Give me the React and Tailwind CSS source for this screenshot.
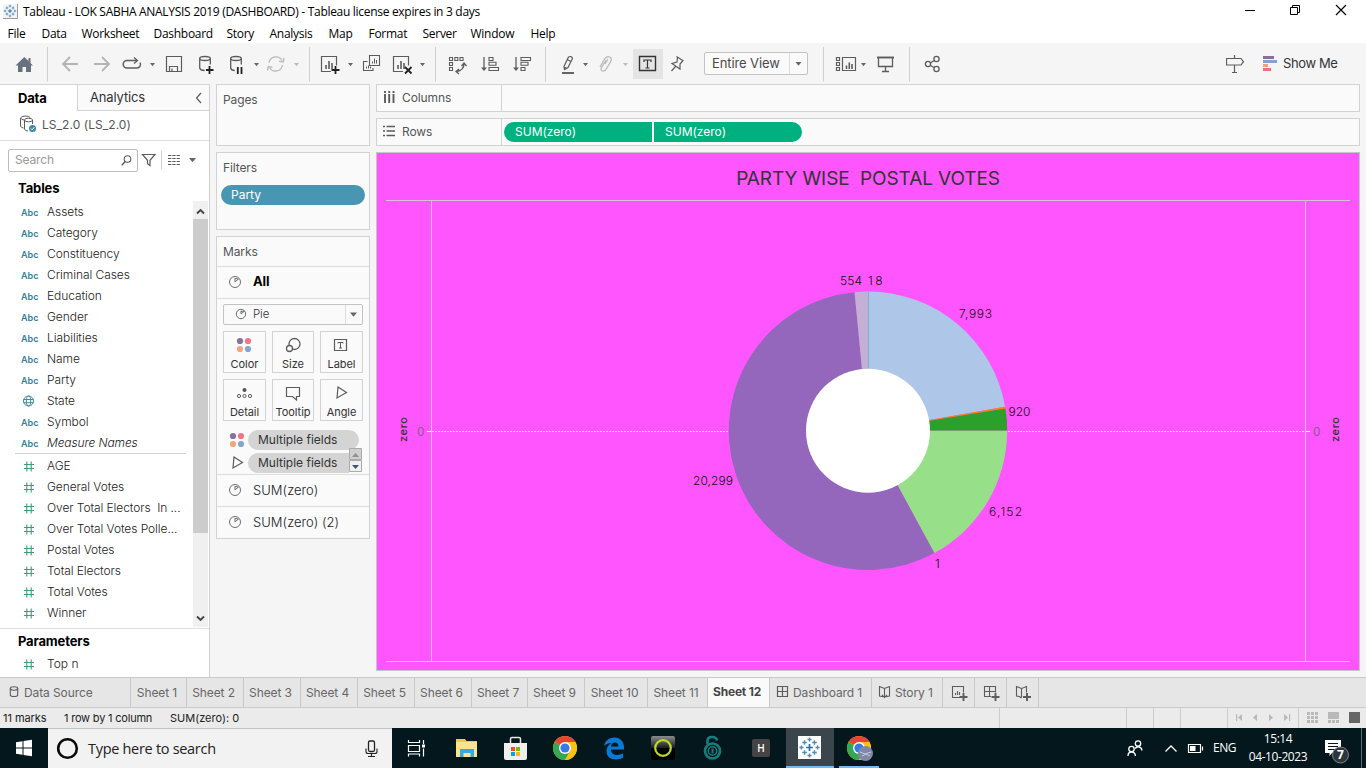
import React from "react";

/* A toolbar-like slice: its children are drawn in window coordinates. */
function Cell({ x, y = 43, w, h = 41, className = "", children }) {
  return (
    <svg
      width={w}
      height={h}
      viewBox={`${x} ${y} ${w} ${h}`}
      fill="none"
      stroke="#5c5c5c"
      strokeWidth="1.3"
      className={`block shrink-0 ${className}`}
    >
      {children}
    </svg>
  );
}

const Caret = ({ x, y = 63, c = "#666", s = 5 }) => (
  <path d={`M${x} ${y}h${s}l${-s / 2} ${s / 2 + 0.8}z`} fill={c} stroke="none" />
);
const Sep = ({ x }) => <path d={`M${x + 0.5} 47V81.5`} stroke="#cfcfcf" strokeWidth="1" />;

function PieIcon({ cx, cy, r = 5.5 }) {
  return (
    <g strokeWidth="1" stroke="#6e6e6e">
      <circle cx={cx} cy={cy} r={r} />
      <path d={`M${cx} ${cy}V${cy - r + 1.5}M${cx} ${cy}L${cx + r * 0.65} ${cy - r * 0.55}M${cx} ${cy - r + 2}Q${cx + 2.5} ${cy - r + 2} ${cx + 3.4} ${cy - 2.6}`} />
    </g>
  );
}

function TableauMark({ cx, cy, s = 1, bg }) {
  const p = (x, y, a) => `M${cx + (x - a) * s} ${cy + y * s}h${2 * a * s}M${cx + x * s} ${cy + (y - a) * s}v${2 * a * s}`;
  return (
    <g strokeWidth={s * 0.9}>
      {bg}
      <path d={p(0, 0, 2.2)} stroke="#2f6f9f" strokeWidth={s * 1.1} />
      <path d={p(-3.2, -3.2, 1.5) + p(3.2, -3.2, 1.5) + p(-3.2, 3.2, 1.5) + p(3.2, 3.2, 1.5)} stroke="#4a8fb8" />
      <path d={p(0, -5.2, 1.3) + p(0, 5.2, 1.3) + p(-5.2, 0, 1.3) + p(5.2, 0, 1.3)} stroke="#5a86b0" />
    </g>
  );
}

function TitleBar() {
  return (
    <div className="flex h-6 items-center bg-white">
      <Cell x={0} y={0} w={23} h={24}>
        <rect x="3" y="4" width="14.5" height="14.5" fill="#f4f4f4" stroke="none" />
        <path d="M3 18.5h14.5V4" stroke="#9a9a9a" strokeWidth="1" />
        <TableauMark cx={10} cy={11} s={0.95} />
      </Cell>
      <span className="grow text-[12px] tracking-[-0.3px] text-black">
        Tableau - LOK SABHA ANALYSIS 2019 (DASHBOARD) - Tableau license expires in 3 days
      </span>
      <Cell x={1226} y={0} w={140} h={24}>
        <g stroke="#000" strokeWidth="1">
          <path d="M1245 10.5h10M1290.5 7.5h7v7h-7zM1292.5 7V5.500h7v7h-2" />
          <path d="M1336 5l10 10M1346 5l-10 10" strokeWidth="1.2" />
        </g>
      </Cell>
    </div>
  );
}

const menus = [
  ["File", "w-[34px]"],
  ["Data", "w-[40px]"],
  ["Worksheet", "w-[72px]"],
  ["Dashboard", "w-[73px]"],
  ["Story", "w-[43px]"],
  ["Analysis", "w-[59px]"],
  ["Map", "w-[40px]"],
  ["Format", "w-[54px]"],
  ["Server", "w-[48px]"],
  ["Window", "w-[60px]"],
  ["Help", "w-[40px]"],
];

function MenuBar() {
  return (
    <div className="flex h-[19px] items-center bg-white pl-[7.5px] text-[12px] leading-[19px] tracking-[-0.28px] text-black">
      {menus.map(([m, w]) => (
        <span key={m} className={`${w} shrink-0`}>{m}</span>
      ))}
    </div>
  );
}

function Bars({ x, y }) {
  return <path d={`M${x} ${y}v-4M${x + 3} ${y}v-8M${x + 6} ${y}v-6`} strokeWidth="1.6" />;
}

function Toolbar() {
  return (
    <div className="flex h-[41px] items-center bg-[#f5f5f5]">
      <Cell x={0} w={48}>
        <path d="M24.300 57L15.500 65.500H18V72h4.500v-5h3.500v5H31v-6.500h2L30.500 63v-5h-2v3z" fill="#68727f" stroke="none" />
        <Sep x={47} />
      </Cell>
      <Cell x={48} w={70}>
        <g stroke="#b4b4b4" strokeWidth="1.8">
          <path d="M78 64H63M70 57l-7 7 7 7" />
          <path d="M94 64h15M102 57l7 7-7 7" />
        </g>
      </Cell>
      <Cell x={118} w={44}>
        <path d="M137 60.500H127a3.800 3.800 0 0 0 0 7.600H137a3.600 3.600 0 0 0 3-5.500" strokeWidth="1.5" />
        <path d="M134 57.500l3.500 3-3.500 3" />
        <Caret x={150} />
      </Cell>
      <Cell x={162} w={32}>
        <path d="M166.500 56.500h15v15h-15zM169.500 71.500v-5h8v5M172 71.500v-3" strokeWidth="1.2" />
      </Cell>
      <Cell x={194} w={32}>
        <ellipse cx="205" cy="58.500" rx="5.300" ry="2" />
        <path d="M199.700 58.500v9.500q.5 2.500 5 2.500M210.300 58.500v6" />
        <path d="M206 70h7.500M209.500 66v8" stroke="#222" strokeWidth="1.8" />
      </Cell>
      <Cell x={226} w={37}>
        <ellipse cx="236" cy="58.500" rx="5.300" ry="2" />
        <path d="M230.700 58.500v9.500q.5 2.500 4 2.500M241.300 58.500v6" />
        <path d="M237.800 67v7M241.500 67v7" stroke="#222" strokeWidth="1.8" />
        <Caret x={254} />
      </Cell>
      <Cell x={263} w={47}>
        <g stroke="#bcbcbc" strokeWidth="1.4">
          <path d="M269 62.500a7 7 0 0 1 13-2M282.500 65a7 7 0 0 1-13 2.500" />
          <path d="M284 58l-.8 4-4-.8M267.500 70.500l.8-4 4 .8" />
        </g>
        <Caret x={294} c="#bbb" />
        <Sep x={309} />
      </Cell>
      <Cell x={310} w={48}>
        <path d="M331 71.500h-9.500v-15h15v9" strokeWidth="1.2" />
        <Bars x={326} y={69} />
        <path d="M331.500 70h8M335.500 66v8" stroke="#222" strokeWidth="1.8" />
        <Caret x={348} />
      </Cell>
      <Cell x={358} w={30}>
        <path d="M369.500 55.500h10v10h-10zM367.500 61.500h-4v9h9.500V68" strokeWidth="1.1" />
        <path d="M372.500 63.500v-2M374.500 63.500v-5M376.500 63.500v-3.500M366.500 68.500v-2M368.500 68.500v-3M370.500 68.500v-2" strokeWidth="1" />
      </Cell>
      <Cell x={388} w={48}>
        <path d="M403 71.500h-9.500v-15h15v9" strokeWidth="1.2" />
        <Bars x={398} y={69} />
        <path d="M405 67l6.500 6.500M411.500 67L405 73.500" stroke="#222" strokeWidth="1.8" />
        <Caret x={420} />
        <Sep x={435} />
      </Cell>
      <Cell x={436} w={40}>
        <path d="M449.500 57.500h3v3h-3zM454.800 57.500h3v3h-3zM460 57.500h3v3h-3zM449.500 62.500h3v3h-3zM449.500 67.500h3v3h-3z" strokeWidth="1.100" />
        <path d="M464 63.500q0 7-7.500 8M461.500 66l2.500-3 2.500 3M459 69l-3 2.500 3 2.500" />
      </Cell>
      <Cell x={476} w={70}>
        <path d="M484 57v12" />
        <path d="M481 67.500h6l-3 3.500z" fill="#5c5c5c" stroke="none" />
        <path d="M489 57.500h4v3h-4zM489 62.300h7v3h-7zM489 67.500h9.500v3H489z" strokeWidth="1.1" />
        <path d="M516 57v12" />
        <path d="M513 67.500h6l-3 3.500z" fill="#5c5c5c" stroke="none" />
        <path d="M521 57.500h9.500v3H521zM521 62.300h7v3h-7zM521 67.500h4v3h-4z" strokeWidth="1.1" />
        <Sep x={545} />
      </Cell>
      <Cell x={546} w={47}>
        <path d="M564 66.500l4.500-9.500q3-1.500 4 1.500l-4.500 9-3.500 2zM563.500 67l4 1.500M567 59.500l4 2" strokeWidth="1.2" />
        <path d="M562 73h12" strokeWidth="1.9" />
        <Caret x={583} />
      </Cell>
      <Cell x={593} w={40}>
        <path d="M605 64l3-5M600 67l5-8.500q3-3.500 6-.5 1 2-.5 4l-5 8q-2 2-4 .500-1-1.500 0-3l4.500-7" stroke="#b9b9b9" />
        <Caret x={623} c="#bbb" />
      </Cell>
      <Cell x={633} w={30}>
        <rect x="633" y="49" width="30" height="30" fill="#e4e4e4" stroke="none" />
        <path d="M639.500 56.500h16v14h-16z" stroke="#333" strokeWidth="1.4" />
        <path d="M644 62v-2h7v2M647.500 60v8M645.500 68h4" stroke="#333" strokeWidth="1.200" />
      </Cell>
      <Cell x={663} w={41}>
        <path d="M676.500 56.500l7 4.500M677.500 57l-.5 5-5 1.500 8 5.500v-5l3-3.500M675.500 66.500l-4 4.500" strokeWidth="1.2" />
      </Cell>
      <div className="flex h-[23px] w-[104px] shrink-0 items-center rounded-[2px] border border-[#c3c3c3] bg-[#fafafa]">
        <span className="w-[84px] pl-[7px] text-[13px] tracking-[-0.1px] text-[#4a4a4a]">Entire View</span>
        <Cell x={789} y={53} w={18} h={21}>
          <path d="M789.500 53v21" stroke="#ddd" strokeWidth="1" />
          <Caret x={795.5} y={62} s={6} />
        </Cell>
      </div>
      <Cell x={808} w={62}>
        <Sep x={823} />
        <path d="M836.500 57.500h3v3h-3zM836.500 62.500h3v3h-3zM836.500 67.500h3v3h-3zM842.500 57.500h13v13h-13z" strokeWidth="1.2" />
        <path d="M846.500 69v-3.500M849.300 69v-6.500M852 69v-5" strokeWidth="1.600" />
        <Caret x={861} />
      </Cell>
      <Cell x={870} w={40}>
        <path d="M877 57.500h17" strokeWidth="1.9" />
        <path d="M878.500 58v8.500h14V58M885.500 66.500V71M882 71.500h7" />
        <Sep x={909} />
      </Cell>
      <Cell x={910} w={316}>
        <circle cx="928" cy="64" r="2.600" />
        <circle cx="936.500" cy="59" r="2.600" />
        <circle cx="936.500" cy="69" r="2.600" />
        <path d="M930.500 63l3.500-2.500M930.500 65.500l3.500 2" />
      </Cell>
      <Cell x={1226} w={57}>
        <path d="M1226.500 58.500h14.500l2.500 3.200-2.500 3.300h-14.500zM1234.500 55v3.500M1234.500 65v7.500M1232 72.500h5" strokeWidth="1.200" />
        <g stroke="none">
          <path d="M1263 56h11v3h-11z" fill="#8a6f9a" />
          <path d="M1263 60h14v3h-14z" fill="#7fa3cf" />
          <path d="M1263 64h5v3h-5z" fill="#f2a37c" />
          <path d="M1263 68h8v3h-8z" fill="#fb6b80" />
        </g>
      </Cell>
      <span className="text-[13px] tracking-[-0.4px] text-[#333]">Show Me</span>
    </div>
  );
}

const dims = ["Assets", "Category", "Constituency", "Criminal Cases", "Education", "Gender", "Liabilities", "Name", "Party", "State", "Symbol", "Measure Names"];
const measures = ["AGE", "General Votes", "Over Total Electors\u00a0 In ...", "Over Total Votes Polle...", "Postal Votes", "Total Electors", "Total Votes", "Winner"];

function Hash() {
  return (
    <svg width="47" height="21" className="shrink-0" stroke="#3c9d76" strokeWidth="1.100" fill="none">
      <path d="M24 9.500h10M24 13.500h10M26.800 6.500v10M31.200 6.500v10" />
    </svg>
  );
}
function Globe() {
  return (
    <svg width="47" height="21" className="shrink-0" stroke="#3f8aa8" strokeWidth="1" fill="none">
      <circle cx="28.500" cy="11" r="5" />
      <ellipse cx="28.500" cy="11" rx="2.200" ry="5" />
      <path d="M23.500 9.500h10M23.500 12.700h10" />
    </svg>
  );
}

function DataPane() {
  return (
    <div className="flex h-[593px] w-[210px] shrink-0 flex-col border-r border-[#cfcfcf] bg-white text-[12px] text-[#333]">
      <div className="flex h-[27px] shrink-0 border-t border-[#d4d4d4]">
        <div className="w-[77px] pl-[18px] text-[13px] leading-[26px] font-bold tracking-[-0.2px] text-black">Data</div>
        <div className="flex grow items-center border-b border-l border-[#d4d4d4] bg-[#fafafa] pl-3 text-[13px]">
          <span className="grow tracking-[-0.15px]">Analytics</span>
          <Cell x={191} y={86} w={18} h={22}>
            <path d="M201 92l-4.500 5 4.500 5" strokeWidth="1.200" />
          </Cell>
        </div>
      </div>
      <div className="flex h-[30px] shrink-0 items-center border-b border-[#dedede] pb-[2px]">
        <Cell x={0} y={111} w={42} h={29}>
          <g strokeWidth="1">
            <path d="M20.500 127v-8q1-2 5-2t5 2M20.500 127q1 2 3 2M20.500 119q1 2 4 2" />
            <ellipse cx="28.500" cy="121" rx="4" ry="1.800" />
            <path d="M24.500 121v9q.5 2 3.500 2M32.500 121v4" />
          </g>
          <circle cx="32.500" cy="129.500" r="3.500" fill="#3e88ab" stroke="none" />
          <path d="M30.800 129.500l1.300 1.300 2.200-2.500" stroke="#fff" strokeWidth="1" />
        </Cell>
        <span className="text-[12px] tracking-[0.05px] text-[#555]">LS_2.0 (LS_2.0)</span>
      </div>
      <div className="flex h-[38px] shrink-0 items-center pl-2">
        <div className="flex h-[23px] w-[130px] items-center rounded-[2px] border border-[#bdbdbd]">
          <span className="grow pl-[6px] text-[12px] tracking-[-0.15px] text-[#999]">Search</span>
          <Cell x={116} y={150} w={20} h={21}>
            <circle cx="126.500" cy="159" r="3.300" strokeWidth="1.100" />
            <path d="M124.200 161.500l-3.500 3.700" />
          </Cell>
        </div>
        <Cell x={138} y={141} w={71} h={38}>
          <path d="M142.500 154.500h12.500l-5 5.800v5.200l-2.500-1.800v-3.400z" strokeWidth="1.200" />
          <path d="M161.500 151v18" stroke="#d0d0d0" strokeWidth="1" />
          <path d="M168 155.500h12M168 158.500h12M168 161.500h12M168 164.500h12" strokeDasharray="3.300 1" strokeWidth="1.200" />
          <Caret x={189} y={158} s={7} />
        </Cell>
      </div>
      <div className="h-[22px] shrink-0 pl-[18px] text-[13px] leading-[18px] font-bold tracking-[-0.1px] text-black">Tables</div>
      <div className="flex h-[428px] shrink-0 border-b border-[#dedede] text-[#222]">
        <div className="w-[193px]">
          {dims.map((d) => (
            <div key={d} className="flex h-[21px] items-center">
              {d === "State" ? <Globe /> : <span className="w-[47px] shrink-0 pt-[2px] pl-[21px] text-[9px] font-semibold text-[#3a7e9c]">Abc</span>}
              <span className={d === "Measure Names" ? "font-light tracking-[-0.12px] italic" : "font-light tracking-[-0.06px]"}>{d}</span>
            </div>
          ))}
          <div className="mr-[7px] ml-[15px] h-[2px] border-t border-[#d4d4d4]" />
          {measures.map((m) => (
            <div key={m} className="flex h-[21px] items-center font-light tracking-[-0.08px] whitespace-nowrap">
              <Hash />
              <span>{m}</span>
            </div>
          ))}
        </div>
        <div className="flex h-[426px] w-[15px] flex-col bg-[#f0f0f0] pt-px">
          <Cell x={193} y={202} w={15} h={17}>
            <path d="M197 213.500l3.500-3.500 3.500 3.500" stroke="#444" strokeWidth="1.900" />
          </Cell>
          <div className="h-[314px] bg-[#cccccc]" />
          <div className="grow" />
          <Cell x={193} y={610} w={15} h={17}>
            <path d="M197 616.500l3.500 3.500 3.500-3.500" stroke="#444" strokeWidth="1.900" />
          </Cell>
        </div>
      </div>
      <div className="h-[24px] shrink-0 pl-[18px] text-[13px] leading-[24px] font-bold tracking-[-0.15px] text-black">Parameters</div>
      <div className="flex h-[21px] shrink-0 items-center font-light text-[#222]">
        <Hash />
        <span>Top n</span>
      </div>
    </div>
  );
}

function FourDots({ x, y }) {
  return (
    <g stroke="none">
      <circle cx={x} cy={y} r="3.100" fill="#87709a" />
      <circle cx={x + 8} cy={y} r="3.100" fill="#fb7286" />
      <circle cx={x} cy={y + 8} r="3.100" fill="#f2a680" />
      <circle cx={x + 8} cy={y + 8} r="3.100" fill="#84a6d0" />
    </g>
  );
}

function MarkButton({ label, x, y, w, children }) {
  return (
    <div className="flex h-[42px] flex-col items-center border border-[#d2d2d2] text-[11px] tracking-[-0.05px] text-[#333]">
      <Cell x={x + 1} y={y + 1} w={w - 2} h={25}>{children}</Cell>
      <span className="leading-[14px] whitespace-nowrap">{label}</span>
    </div>
  );
}

const pill = "flex h-[20px] items-center rounded-full text-[12px]";

function Cards() {
  return (
    <div className="flex w-[154px] shrink-0 flex-col gap-[6px] text-[12px] tracking-[-0.12px] text-[#555]">
      <div className="h-[62px] border border-[#d2d2d2] bg-[#fafafa] pt-[6px] pl-[6px] leading-[18px]">Pages</div>
      <div className="h-[78px] border border-[#d2d2d2] bg-[#fafafa] pt-[6px] pl-1">
        <div className="pl-[2px] leading-[18px]">Filters</div>
        <div className={`${pill} mt-2 w-[144px] bg-[#4996b2] pl-[10px] tracking-[0px] text-white`}>Party</div>
      </div>
      <div className="flex h-[303px] flex-col border border-[#d2d2d2] bg-[#fafafa]">
        <div className="h-[30px] shrink-0 border-b border-[#dedede] pl-[6px] leading-[29px]">Marks</div>
        <div className="flex h-[32px] shrink-0 items-center border-b border-[#dedede] pb-px text-[13px] font-bold text-black">
          <Cell x={217} y={267} w={36} h={31}>
            <PieIcon cx={235} cy={282} />
          </Cell>
          All
        </div>
        <div className="mt-[5px] ml-[6px] flex h-[21px] w-[140px] shrink-0 items-center rounded-[2px] border border-[#c3c3c3] text-[11.5px]">
          <Cell x={224} y={305} w={29} h={19}>
            <PieIcon cx={241} cy={314} r={4.7} />
          </Cell>
          <span className="grow font-light text-[#333]">Pie</span>
          <Cell x={344} y={305} w={17} h={19}>
            <path d="M344.500 305v19" stroke="#ddd" strokeWidth="1" />
            <Caret x={349} y={312.500} s={7} />
          </Cell>
        </div>
        <div className="mt-[6px] ml-[6px] grid shrink-0 grid-cols-[43px_42px_43px] gap-[6px]">
          <MarkButton label="Color" x={223} y={331} w={43}>
            <FourDots x={240} y={341} />
          </MarkButton>
          <MarkButton label="Size" x={272} y={331} w={42}>
            <circle cx="294.500" cy="344" r="5.500" />
            <circle cx="289.500" cy="348.500" r="3" fill="#fafafa" />
          </MarkButton>
          <MarkButton label="Label" x={320} y={331} w={43}>
            <path d="M334.500 339.500h12v11h-12z" strokeWidth="1.200" />
            <path d="M338 343.500V342.500h5v1M340.500 342.500v5.500M339 348h3" strokeWidth="1" />
          </MarkButton>
          <MarkButton label="Detail" x={223} y={379} w={43}>
            <circle cx="244.500" cy="390" r="2" fill="#555" stroke="none" />
            <g strokeWidth="1"><circle cx="239" cy="396" r="1.600" /><circle cx="244.500" cy="396" r="1.600" /><circle cx="250" cy="396" r="1.600" /></g>
          </MarkButton>
          <MarkButton label="Tooltip" x={272} y={379} w={42}>
            <path d="M286.500 387.500h13v9h-3v3.500l-4-3.500h-6z" strokeWidth="1.200" />
          </MarkButton>
          <MarkButton label="Angle" x={320} y={379} w={43}>
            <path d="M338 387l8.500 5.500-9.500 5.500z" strokeWidth="1.200" />
          </MarkButton>
        </div>
        <div className="mt-[8px] flex h-[45px] shrink-0">
          <Cell x={217} y={429} w={31} h={45}>
            <FourDots x={233} y={436} />
            <path d="M234 457l8.500 5.500-9.500 5.500z" strokeWidth="1.200" />
          </Cell>
          <div className="flex w-[101px] flex-col gap-[3px] pt-[1px] tracking-[0px] text-[#333]">
            <div className={`${pill} w-[111px] bg-[#d4d4d4] pl-[10px]`}>Multiple fields</div>
            <div className={`${pill} w-[101px] rounded-r-none bg-[#d4d4d4] pl-[10px]`}><span className="whitespace-nowrap">Multiple fields</span></div>
          </div>
          <Cell x={349} y={429} w={13} h={45} className="relative">
            <path d="M349.500 448.500h12v11h-12z" fill="#cfcfcf" stroke="#ababab" strokeWidth="1" />
            <path d="M349.500 460.500h12v11h-12z" fill="#f0f0f0" stroke="#ababab" strokeWidth="1" />
            <path d="M352 457l3.500-4 3.500 4z" fill="#929292" stroke="none" />
            <path d="M352 465l3.500 4 3.500-4z" fill="#44546a" stroke="none" />
          </Cell>
        </div>
        <div className="flex h-[32px] shrink-0 items-center border-t border-[#dedede] text-[13px] font-light tracking-[0.03px] text-[#222]">
          <Cell x={217} y={475} w={36} h={31}>
            <PieIcon cx={235} cy={490} />
          </Cell>
          SUM(zero)
        </div>
        <div className="flex h-[32px] shrink-0 items-center border-t border-[#dedede] text-[13px] font-light tracking-[0.03px] text-[#222]">
          <Cell x={217} y={507} w={36} h={31}>
            <PieIcon cx={235} cy={522} />
          </Cell>
          SUM(zero) (2)
        </div>
      </div>
    </div>
  );
}

const slices = [
  [18, "#6fa8d6"],
  [7993, "#aec7e8"],
  [80, "#ff7f0e"],
  [920, "#2ca02c"],
  [6152, "#98df8a"],
  [1, "#d62728"],
  [20299, "#9467bd"],
  [554, "#c5b0d5"],
];
const labels = [
  ["554", 840, 285, 22],
  ["18", 868, 285, 14.5],
  ["7,993", 959, 318, 33],
  ["920", 1008.5, 416, 22],
  ["6,152", 989, 516, 33],
  ["1", 935, 568, 7],
  ["20,299", 693, 485, 40],
];

function Chart() {
  const total = slices.reduce((s, [v]) => s + v, 0);
  const cx = 868;
  const cy = 430.7;
  const r = 139.2;
  let acc = 0;
  const pt = (v) => {
    const a = (v / total) * 2 * Math.PI;
    return `${cx + r * Math.sin(a)} ${cy - r * Math.cos(a)}`;
  };
  return (
    <svg width="982" height="470" viewBox="377 200 982 470" className="block" fontFamily="Inter, 'Open Sans', sans-serif">
      <g fill="none" stroke="#e6c0e6" strokeWidth="1">
        <path d="M386 200.500H1350" stroke="#d8c0d8" />
        <path d="M431.500 201V661M1305.500 201V661M386 661.500H1350" />
        <path d="M432 431.500H1305" stroke="#f3d5f3" strokeDasharray="2 1" />
        <path d="M427 431.500h4M1306 431.500h4" stroke="#fff" />
      </g>
      {slices.map(([v, c]) => {
        const from = pt(acc);
        acc += v;
        return <path key={v} d={`M${cx} ${cy}L${from}A${r} ${r} 0 ${v / total > 0.5 ? 1 : 0} 1 ${pt(acc)}Z`} fill={c} />;
      })}
      <path d="M868.500 291.500V370" stroke="#7fb0dc" strokeWidth="1" />
      <circle cx={cx} cy={cy} r="62" fill="#fff" />
      <g fontSize="12" fontWeight="300" fill="#111">
        {labels.map(([t, x, y, w]) => (
          <text key={t} x={x} y={y} textLength={w}>{t}</text>
        ))}
      </g>
      <g fontSize="12" fill="#8f5a8f">
        <text x="417" y="436">0</text>
        <text x="1313" y="436">0</text>
      </g>
      <g fontSize="11" fontWeight="500" fill="#333">
        <text transform="translate(406.500 442) rotate(-90)" textLength="25">zero</text>
        <text transform="translate(1339 442) rotate(-90)" textLength="25">zero</text>
      </g>
    </svg>
  );
}

function Shelf({ label, icon, children }) {
  return (
    <div className="flex h-[28px] border border-[#d2d2d2] bg-[#fafafa]">
      <div className="flex w-[125px] items-center border-r border-[#d2d2d2] text-[12px] tracking-[-0.1px] text-[#555]">
        {icon}
        {label}
      </div>
      <div className="flex items-center gap-[2px] pl-[2px]">{children}</div>
    </div>
  );
}

function Workspace() {
  return (
    <div className="flex w-[984px] shrink-0 flex-col gap-[6px]">
      <Shelf
        label="Columns"
        icon={
          <Cell x={377} y={85} w={25} h={26}>
            <path d="M385 91v2M389.200 91v2M393.500 91v2M385 94v9M389.200 94v9M393.500 94v9" strokeWidth="1.900" />
          </Cell>
        }
      />
      <Shelf
        label="Rows"
        icon={
          <Cell x={377} y={119} w={25} h={26}>
            <path d="M383 126.500h2M386.500 126.500h8.500M383 131h2M386.500 131h8.500M383 135.500h2M386.500 135.500h8.500" strokeWidth="1.700" />
          </Cell>
        }
      >
        <div className="flex h-[20px] w-[148px] items-center rounded-l-full bg-[#00b180] pl-[11px] text-[12px] text-white">SUM(zero)</div>
        <div className="flex h-[20px] w-[148px] items-center rounded-r-full bg-[#00b180] pl-[11px] text-[12px] text-white">SUM(zero)</div>
      </Shelf>
      <div className="h-[519px] overflow-hidden border border-[#c6c6c6] bg-[#ff55ff]">
        <div className="h-[47px] text-center text-[19px] leading-[51px] tracking-[-0.1px] whitespace-pre text-[#333]">PARTY WISE  POSTAL VOTES</div>
        <Chart />
      </div>
    </div>
  );
}

const sheets = [
  ["Sheet 1", "w-[56px]"],
  ["Sheet 2", "w-[57px]"],
  ["Sheet 3", "w-[57px]"],
  ["Sheet 4", "w-[57px]"],
  ["Sheet 5", "w-[57px]"],
  ["Sheet 6", "w-[57px]"],
  ["Sheet 7", "w-[56px]"],
  ["Sheet 9", "w-[57px]"],
  ["Sheet 10", "w-[63px]"],
  ["Sheet 11", "w-[60px]"],
  ["Sheet 12", "w-[62px]"],
];
const tab = "flex h-full shrink-0 items-center border-r border-[#c9c9c9]";

function SheetTabs() {
  return (
    <div className="flex h-[31px] border-y border-[#c9c9c9] bg-[#e6e6e6] text-[12px] tracking-[-0.1px] whitespace-nowrap text-[#666]">
      <div className={`${tab} w-[131px]`}>
        <Cell x={0} y={678} w={24} h={29}>
          <ellipse cx="14" cy="688.500" rx="3.700" ry="1.700" strokeWidth="1.100" />
          <path d="M10.300 688.500v6.500q0 1.500 3.700 1.500t3.700-1.500v-6.500" strokeWidth="1.100" />
        </Cell>
        Data Source
      </div>
      {sheets.map(([s, w]) => (
        <div key={s} className={`${tab} ${w} justify-center pr-[3px] ${s === "Sheet 12" ? "bg-[#fafafa] pb-[2px] font-bold tracking-[-0.2px] text-[#444]" : ""}`}>{s}</div>
      ))}
      <div className={`${tab} w-[102px]`}>
        <Cell x={770} y={678} w={23} h={29}>
          <path d="M777.500 686.500h10v10h-10zM782.500 686.500v10M777.500 691.500h10" strokeWidth="1.200" />
        </Cell>
        Dashboard 1
      </div>
      <div className={`${tab} w-[71px]`}>
        <Cell x={872} y={678} w={23} h={29}>
          <path d="M884.500 688.500l-5-2v9.500l3 .5v-1l2 2 2-2v1l3-.5v-9.500zM884.500 688.500v9" strokeWidth="1.100" />
        </Cell>
        Story 1
      </div>
      <div className={`${tab} w-[32px]`}>
        <Cell x={943} y={678} w={31} h={29}>
          <path d="M960 697.500h-7.500v-11h11v6M955.500 695v-2M957.500 695v-4M959.500 695v-3" strokeWidth="1.100" />
          <path d="M959.500 697h8M963.500 693v8" strokeWidth="1.900" />
        </Cell>
      </div>
      <div className={`${tab} w-[32px]`}>
        <Cell x={975} y={678} w={31} h={29}>
          <path d="M991 696.500h-6.500v-10h11v6M989.500 686.500v10M984.500 691.500h11" strokeWidth="1.100" />
          <path d="M991.500 697h8M995.500 693v8" strokeWidth="1.900" />
        </Cell>
      </div>
      <div className={`${tab} w-[32px]`}>
        <Cell x={1007} y={678} w={31} h={29}>
          <path d="M1021.500 688.500l-5-2v9.500l3 .5 2 1.500M1021.500 697.500v-9l5-2v6" strokeWidth="1.100" />
          <path d="M1023 697h8M1027 693v8" strokeWidth="1.900" />
        </Cell>
      </div>
    </div>
  );
}

function StatusBar() {
  return (
    <div className="flex h-[20px] items-center bg-[#ebebeb] text-[11px] text-[#222]">
      <span className="w-[61px] pl-[3px] tracking-[-0.05px]">11 marks</span>
      <span className="w-[106px] pl-[3px] tracking-[-0.2px]">1 row by 1 column</span>
      <span className="grow pl-[3px]">SUM(zero): 0</span>
      <Cell x={996} y={708} w={370} h={20}>
        <path d="M999.500 708v20M1126.500 708v20M1153.500 708v20M1180.500 708v20M1227.500 708v20M1298.500 708v20" stroke="#cccccc" strokeWidth="1" />
        <g fill="#b9b9b9" stroke="none">
          <path d="M1236 714h1.200v7h-1.200zM1242 714v7l-4-3.500zM1257 714v7l-4-3.500zM1269 714v7l4-3.500zM1284 714v7l4-3.500zM1289 714h1.200v7h-1.200z" />
          <path d="M1307 712h3v3h-3zM1311 712h3v3h-3zM1315 712h3v3h-3zM1307 716h3v3h-3zM1311 716h3v3h-3zM1315 716h3v3h-3zM1307 720h3v3h-3zM1311 720h3v3h-3zM1315 720h3v3h-3zM1328 712h11v7h-11zM1328 720h3v3h-3zM1332 720h3v3h-3zM1336 720h3v3h-3z" />
          <path d="M1349 712h11v11h-11z" fill="#666" />
        </g>
      </Cell>
    </div>
  );
}

function Chrome({ cx }) {
  return (
    <g stroke="none">
      <circle cx={cx} cy="748" r="12" fill="#fbc116" />
      <path d={`M${cx} 748L${cx - 10.4} 742A12 12 0 0 1 ${cx + 10.4} 742Z`} fill="#ea4335" />
      <path d={`M${cx} 748L${cx - 10.4} 742A12 12 0 0 0 ${cx} 760L${cx + 5.2} 751Z`} fill="#34a853" />
      <path d={`M${cx} 742h10.400a12 12 0 0 1-10.400 18l5.200-9z`} fill="#fbc116" />
      <circle cx={cx} cy="748" r="6" fill="#fff" />
      <circle cx={cx} cy="748" r="4.600" fill="#3b78e7" />
    </g>
  );
}

function Taskbar() {
  return (
    <div className="flex h-[40px] bg-[#04171d] font-['Open_Sans','Noto_Sans',sans-serif]">
      <Cell x={0} y={728} w={48} h={40}>
        <path d="M16 742.200l6.500-1v6.300H16zM23.500 741l8.500-1.200v7.700h-8.500zM16 748.500h6.500v6.300l-6.500-1zM23.500 748.500H32v7.700l-8.500-1.200z" fill="#fff" stroke="none" />
      </Cell>
      <div className="flex w-[344px] shrink-0 items-center border-t border-[#c4c4c4] bg-[#f2f2f2]">
        <Cell x={48} y={728} w={40} h={40}>
          <circle cx="67.500" cy="747.500" r="9.300" stroke="#0a0a0a" strokeWidth="2.600" />
        </Cell>
        <span className="grow text-[14.500px] tracking-[-0.300px] text-[#222]">Type here to search</span>
        <Cell x={360} y={728} w={32} h={40}>
          <rect x="368.500" y="740" width="6" height="10.500" rx="1.500" stroke="#222" />
          <path d="M366 747.500v3q0 2 2 2h7q2 0 2-2v-3M371.500 752.500v3M368 755.500h7" stroke="#222" strokeWidth="1.100" />
        </Cell>
      </div>
      <Cell x={392} y={728} w={48} h={40}>
        <path d="M408.500 740v2.500h11V740M408.500 745.500h11v6h-11zM408.500 756.500v-2.500h11v2.500M423.500 740v4M423.500 748.500v8" stroke="#fff" strokeWidth="1.200" />
        <path d="M422 744.500h3v3h-3z" fill="#fff" stroke="none" />
      </Cell>
      <Cell x={440} y={728} w={54} h={40}>
        <g stroke="none">
          <path d="M456 739h9l1.500 2H477v16h-21z" fill="#f5c64c" />
          <path d="M456 742h21v15h-21z" fill="#fde28f" />
          <path d="M460 757v-8h14v8h-3.500v-4h-7v4z" fill="#37a9e0" />
        </g>
      </Cell>
      <Cell x={494} y={728} w={46} h={40}>
        <path d="M510.500 744v-5q0-1.500 1.500-1.500h7q1.500 0 1.500 1.500v5" stroke="#e6e6e6" strokeWidth="1.500" />
        <g stroke="none">
          <path d="M504 743h23v15q0 2-2 2h-19q-2 0-2-2z" fill="#f0f0f0" />
          <path d="M511 747h4v4h-4z" fill="#f25022" />
          <path d="M516 747h4v4h-4z" fill="#7fba00" />
          <path d="M511 752h4v4h-4z" fill="#00a4ef" />
          <path d="M516 752h4v4h-4z" fill="#ffb900" />
        </g>
      </Cell>
      <Cell x={540} y={728} w={50} h={40}>
        <Chrome cx={565} />
      </Cell>
      <Cell x={590} y={728} w={50} h={40}>
        <path d="M604 746c1-5 5-8.500 10.500-8.500 6 0 9.500 4.500 9.500 9.500v2.500h-13c0 4 3 5.500 6 5.500 2.500 0 4.500-.7 6-1.700v4.500c-2 1.200-4.500 1.700-7 1.700-6 0-9.500-3.500-9.500-8.500 0-3.500 2-6.500 5-8-3 .3-5.500 1-7.500 3zM611 746.500h7.500c0-2.500-1.500-4-3.500-4s-3.700 1.500-4 4z" fill="#0a7ad6" stroke="none" fillRule="evenodd" />
      </Cell>
      <Cell x={640} y={728} w={48} h={40}>
        <defs>
          <linearGradient id="gloss" x1="0" y1="0" x2="0" y2="1">
            <stop offset="0" stopColor="#8b8b8b" />
            <stop offset="0.500" stopColor="#1c1c1c" />
            <stop offset="0.520" stopColor="#000" />
            <stop offset="1" stopColor="#000" />
          </linearGradient>
        </defs>
        <rect x="651" y="736" width="24" height="24" rx="2" fill="url(#gloss)" stroke="none" />
        <circle cx="663" cy="748" r="7.800" stroke="#b6dc28" strokeWidth="2.200" />
      </Cell>
      <Cell x={688} y={728} w={50} h={40}>
        <path d="M707.500 744v-3q0-4 4.500-4t5 3.500" stroke="#12807f" strokeWidth="2.600" />
        <circle cx="712.500" cy="751" r="7.500" stroke="#12807f" strokeWidth="2.600" />
        <circle cx="712.500" cy="751" r="4.200" stroke="#12807f" strokeWidth="1.500" />
        <path d="M712.500 748.500v5" stroke="#12807f" strokeWidth="2" />
      </Cell>
      <div className="flex w-[48px] shrink-0 items-center justify-start pl-[14px]">
        <div className="flex h-[18px] w-[18px] items-center justify-center rounded-[2px] bg-[#444] text-[10px] font-semibold text-white">H</div>
      </div>
      <Cell x={786} y={728} w={48} h={40} className="bg-[#3a464b]">
        <path d="M786 766h48v2h-48z" fill="#76b9ed" stroke="none" />
        <TableauMark cx={809.500} cy={747.500} s={1.550} bg={<rect x="798" y="736" width="23" height="23" fill="#fff" stroke="none" />} />
      </Cell>
      <Cell x={834} y={728} w={286} h={40}>
        <path d="M839 766h40v2h-40z" fill="#76b9ed" stroke="none" />
        <Chrome cx={859} />
        <circle cx="865.500" cy="753.500" r="7.500" fill="#7f88a8" stroke="none" />
        <path d="M860 752l5 2 6-2M862 756l4-2 4 2" stroke="#c9cad6" strokeWidth="1" />
      </Cell>
      <Cell x={1120} y={728} w={92} h={40}>
        <g stroke="#fff" strokeWidth="1.300">
          <circle cx="1138" cy="743.500" r="2.700" />
          <path d="M1135 748.500q3-3.500 6.500 0l.5 2" />
          <circle cx="1131.500" cy="749" r="2.700" />
          <path d="M1128 756q0-4 3.500-4t4 4" />
          <path d="M1165.500 751.500l5.500-5.500 5.500 5.500" />
          <path d="M1188.500 744.500h12v8h-12zM1202.500 746.500v4" strokeWidth="1.200" />
        </g>
        <path d="M1190 746h5.500v5h-5.500z" fill="#fff" stroke="none" />
      </Cell>
      <div className="flex w-[34px] shrink-0 items-center pl-[1px] text-[12px] tracking-[-0.500px] text-white">ENG</div>
      <div className="flex w-[64px] shrink-0 flex-col items-center justify-center text-[12px] leading-[18px] tracking-[-0.420px] whitespace-nowrap text-white">
        <span>15:14</span>
        <span>04-10-2023</span>
      </div>
      <div className="relative">
        <Cell x={1310} y={728} w={56} h={40}>
          <path d="M1325 740h16v13h-9l-2.500 3v-3h-4.500z" fill="#fff" stroke="none" />
          <path d="M1328 743.500h10M1328 746.500h10M1328 749.500h7" stroke="#04171d" strokeWidth="1" />
          <circle cx="1340.500" cy="755" r="8" fill="#2d363a" stroke="#7d8487" strokeWidth="1" />
          <path d="M1361.500 728v40" stroke="#5c696e" strokeWidth="1" />
        </Cell>
        <span className="absolute top-[18px] left-[27px] text-[12px] leading-[18px] font-bold text-white">7</span>
      </div>
    </div>
  );
}

export default function App() {
  return (
    <div className="h-[768px] w-[1366px] overflow-hidden bg-[#f5f5f5] font-['Inter','Open_Sans',sans-serif]">
      <div className="font-['Open_Sans','Noto_Sans',sans-serif]">
        <TitleBar />
        <MenuBar />
      </div>
      <Toolbar />
      <div className="flex h-[593px] gap-[6px]">
        <DataPane />
        <Cards />
        <Workspace />
      </div>
      <SheetTabs />
      <StatusBar />
      <Taskbar />
    </div>
  );
}
